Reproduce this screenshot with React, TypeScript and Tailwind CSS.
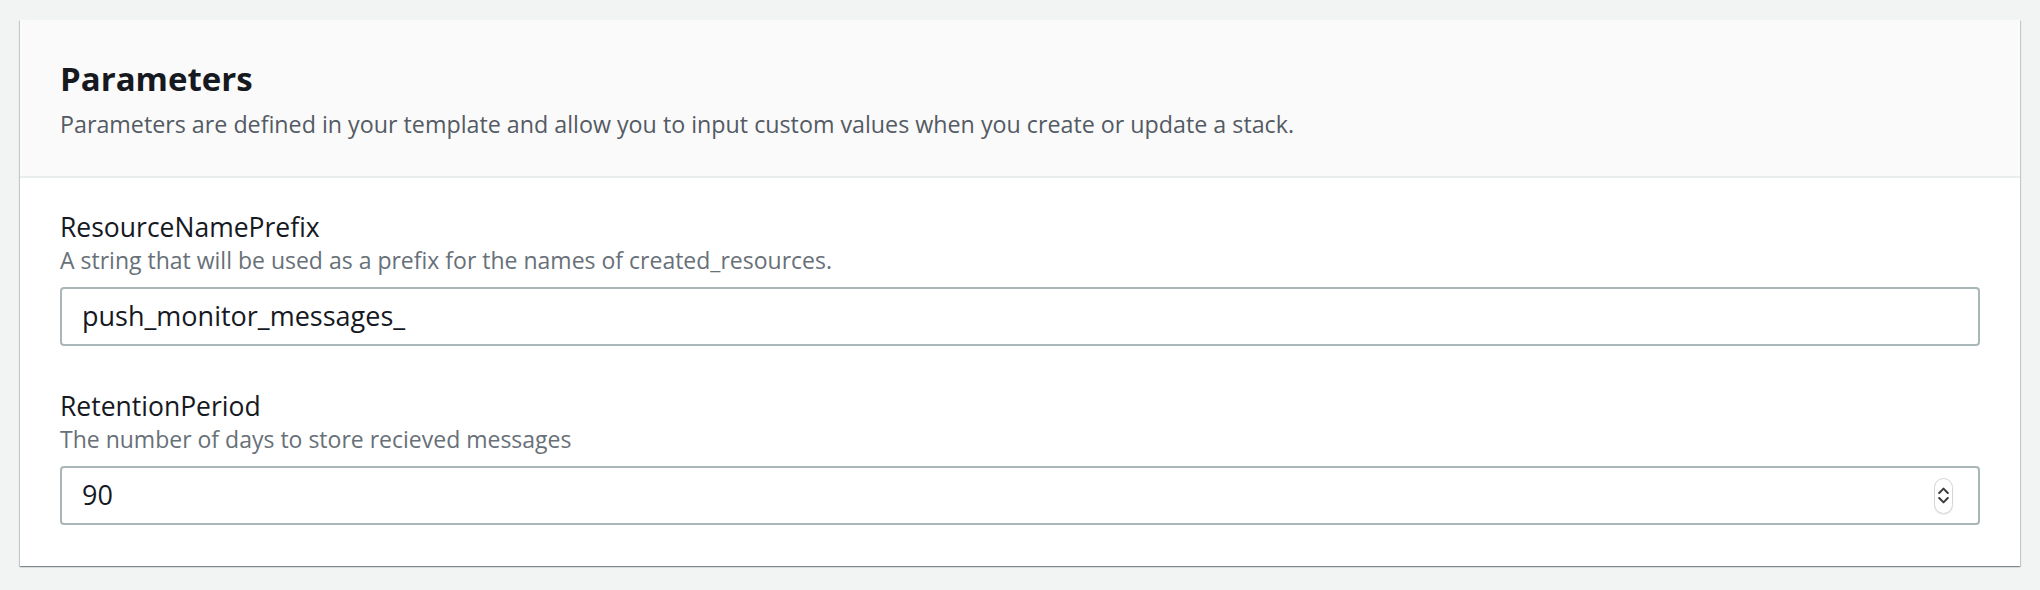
import React from 'react';

function Spinner() {
  return (
    <div className="flex h-[36px] w-[19px] flex-col items-center justify-center gap-[3px] rounded-full border border-[#d5d5d5] bg-white shadow-[0_1px_1px_rgba(0,0,0,0.08)]">
      <svg width="11" height="7" viewBox="0 0 11 7" fill="none">
        <path d="M1.2 6L5.5 1.6L9.8 6" stroke="#3d3d3d" strokeWidth="2" strokeLinecap="round" strokeLinejoin="round" />
      </svg>
      <svg width="11" height="7" viewBox="0 0 11 7" fill="none">
        <path d="M1.2 1L5.5 5.4L9.8 1" stroke="#3d3d3d" strokeWidth="2" strokeLinecap="round" strokeLinejoin="round" />
      </svg>
    </div>
  );
}

function Field({
  label,
  description,
  value,
  numeric,
}: {
  label: string;
  description: string;
  value: string;
  numeric?: boolean;
}) {
  return (
    <div className="flex flex-col">
      <label className="text-[26.5px] leading-[34px] text-[#16191f]">{label}</label>
      <p className="text-[23px] leading-[32px] text-[#687078]">{description}</p>
      <div className="mt-[11px] flex h-[59px] items-center rounded-[4px] border-2 border-[#aab7b8] bg-white pl-[20px] pr-[25px]">
        <input
          readOnly
          value={value}
          className="min-w-0 flex-1 bg-transparent text-[27px] text-[#16191f] outline-none"
        />
        {numeric && <Spinner />}
      </div>
    </div>
  );
}

export default function App() {
  return (
    <div className="min-h-screen bg-[#f2f3f3] px-[20px] pt-[20px] font-['Open_Sans',sans-serif]">
      <section className="bg-white shadow-[0_1px_1px_0_rgba(0,28,36,0.3),1px_1px_1px_0_rgba(0,28,36,0.15),-1px_1px_1px_0_rgba(0,28,36,0.15)]">
        <header className="border-b-2 border-[#eaeded] bg-[#fafafa] px-[40px] pt-[37px] pb-[36px]">
          <h2 className="text-[33px] font-bold leading-[44px] text-[#16191f]">Parameters</h2>
          <p className="mt-[7px] text-[23.25px] leading-[32px] text-[#545b64]">
            Parameters are defined in your template and allow you to input custom values when you create or update a stack.
          </p>
        </header>

        <div className="flex flex-col gap-[43px] px-[40px] pt-[32px] pb-[41px]">
          <Field
            label="ResourceNamePrefix"
            description="A string that will be used as a prefix for the names of created_resources."
            value="push_monitor_messages_"
          />
          <Field
            label="RetentionPeriod"
            description="The number of days to store recieved messages"
            value="90"
            numeric
          />
        </div>
      </section>
    </div>
  );
}
